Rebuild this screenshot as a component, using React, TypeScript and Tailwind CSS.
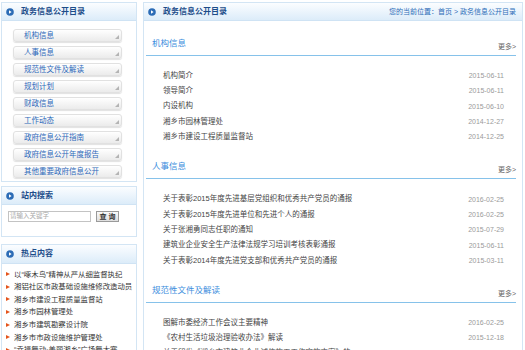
import React from "react";

const font = "font-['Liberation_Sans','Noto_Sans_CJK_SC',sans-serif]";

const menu = [
  "机构信息",
  "人事信息",
  "规范性文件及解读",
  "规划计划",
  "财政信息",
  "工作动态",
  "政府信息公开指南",
  "政府信息公开年度报告",
  "其他重要政府信息公开",
];

const hot = [
  "以“啄木鸟”精神从严从细监督执纪",
  "湘铝社区市政基础设施维修改造动员",
  "湘乡市建设工程质量监督站",
  "湘乡市园林管理处",
  "湘乡市建筑勘察设计院",
  "湘乡市市政设施维护管理处",
  "“幸福舞动·美丽湘乡”广场舞大赛",
];

const sections = [
  {
    title: "机构信息",
    items: [
      ["机构简介", "2015-06-11"],
      ["领导简介", "2015-06-11"],
      ["内设机构", "2015-06-10"],
      ["湘乡市园林管理处", "2014-12-27"],
      ["湘乡市建设工程质量监督站", "2014-12-25"],
    ],
  },
  {
    title: "人事信息",
    items: [
      ["关于表彰2015年度先进基层党组织和优秀共产党员的通报", "2016-02-25"],
      ["关于表彰2015年度先进单位和先进个人的通报", "2016-02-25"],
      ["关于张湘勇同志任职的通知", "2015-07-29"],
      ["建筑业企业安全生产法律法规学习培训考核表彰通报", "2015-06-11"],
      ["关于表彰2014年度先进党支部和优秀共产党员的通报", "2015-03-11"],
    ],
  },
  {
    title: "规范性文件及解读",
    items: [
      ["图解市委经济工作会议主要精神", "2016-02-25"],
      ["《农村生活垃圾治理验收办法》解读", "2015-12-18"],
      ["关于印发《湘乡市建筑业企业诚信施工工作实施方案》的...", "2015-08-18"],
    ],
  },
];

function Dot() {
  return (
    <svg width="8" height="8" viewBox="0 0 8 8" className="shrink-0">
      <circle cx="4" cy="4" r="3.8" fill="#2c6cb6" />
      <path d="M3 2.2 L5.6 4 L3 5.8 Z" fill="#ffffff" />
    </svg>
  );
}

function PanelHead({ title, right, tall }: { title: string; right?: React.ReactNode; tall?: boolean }) {
  return (
    <div
      className={`${tall ? "h-[19px]" : "h-[18px]"} flex items-center justify-between bg-gradient-to-b from-[#fbfdff] to-[#dcecf9] border-b border-[#cfe3f4] pl-[4px] pr-[6px]`}
    >
      <div className="flex items-center gap-[7px]">
        <Dot />
        <span className="text-[8px] font-bold text-[#1d4d8a] leading-none">{title}</span>
      </div>
      {right}
    </div>
  );
}

export default function App() {
  return (
    <div className={`${font} h-[350px] w-[525px] overflow-hidden bg-white flex items-start pt-[2px] pl-[1px]`}>
      {/* left column */}
      <div className="w-[136px] flex flex-col shrink-0">
        <div className="border border-[#d3e5f4] shrink-0">
          <PanelHead title="政务信息公开目录" />
          <div className="flex flex-col gap-[4px] pt-[8px] pb-[3px] pl-[11px]">
            {menu.map((m) => (
              <div
                key={m}
                className="relative w-[109px] h-[13px] rounded-[3px] border border-[#e1e1e1] bg-gradient-to-b from-[#ffffff] to-[#ebebeb] shadow-[0_1px_1px_rgba(0,0,0,0.12)] flex items-center pl-[10px] text-[7.5px] text-[#2d69ba] leading-none"
              >
                {m}
                <span className="absolute right-[2px] bottom-[2px] w-0 h-0 border-l-[4px] border-l-transparent border-b-[4px] border-b-[#b4b4b4]" />
              </div>
            ))}
          </div>
        </div>

        <div className="border border-[#d3e5f4] h-[51px] mt-[4px] shrink-0">
          <PanelHead title="站内搜索" />
          <div className="flex items-center pl-[6px] pt-[6px] gap-[5px]">
            <div className="w-[83px] h-[11px] border border-[#c3c3c3] flex items-center pl-[1px] text-[6.5px] text-[#aaa] leading-none">
              请输入关键字
            </div>
            <div className="w-[23px] h-[11px] border border-[#9a9a9a] bg-gradient-to-b from-[#fafafa] to-[#dedede] flex items-center justify-center text-[7px] text-[#333] leading-none font-bold">
              查 询
            </div>
          </div>
        </div>

        <div className="border border-[#d3e5f4] mt-[7px] shrink-0 h-[120px]">
          <PanelHead title="热点内容" tall />
          <ul className="pt-[4px] pl-[4px]">
            {hot.map((h) => (
              <li key={h} className="flex items-center h-[12.6px] text-[7.4px] text-[#333] leading-none whitespace-nowrap">
                <span className="w-0 h-0 border-y-[2.5px] border-y-transparent border-l-[4px] border-l-[#e4541c] mr-[4px]" />
                {h}
              </li>
            ))}
          </ul>
        </div>
      </div>

      {/* right column */}
      <div className="ml-[6px] w-[380px] border border-[#d3e5f4] shrink-0 h-[400px]">
        <PanelHead
          title="政务信息公开目录"
          right={
            <span className="text-[7px] text-[#2d6db8] leading-none">您的当前位置：首页 &gt; 政务信息公开目录</span>
          }
        />
        <div className="pl-[2px] pr-[6px]">
          {sections.map((s) => (
            <div key={s.title} className="pt-[16px]">
              <div className="flex items-end justify-between border-b border-[#86c2ea]">
                <span className="pl-[6px] pb-[6px] text-[8.5px] text-[#3b8ddd] leading-[12px]">{s.title}</span>
                <span className="pb-[3px] text-[7px] text-[#666] leading-[10px]">更多&gt;</span>
              </div>
              <ul className="pt-[12px] pl-[17px] pr-[12px]">
                {s.items.map(([t, d]) => (
                  <li key={t} className="flex items-center justify-between h-[15.3px] leading-none whitespace-nowrap">
                    <span className="text-[7.5px] text-[#444]">{t}</span>
                    <span className="text-[7px] text-[#9a9a9a]">{d}</span>
                  </li>
                ))}
              </ul>
            </div>
          ))}
        </div>
      </div>
    </div>
  );
}
